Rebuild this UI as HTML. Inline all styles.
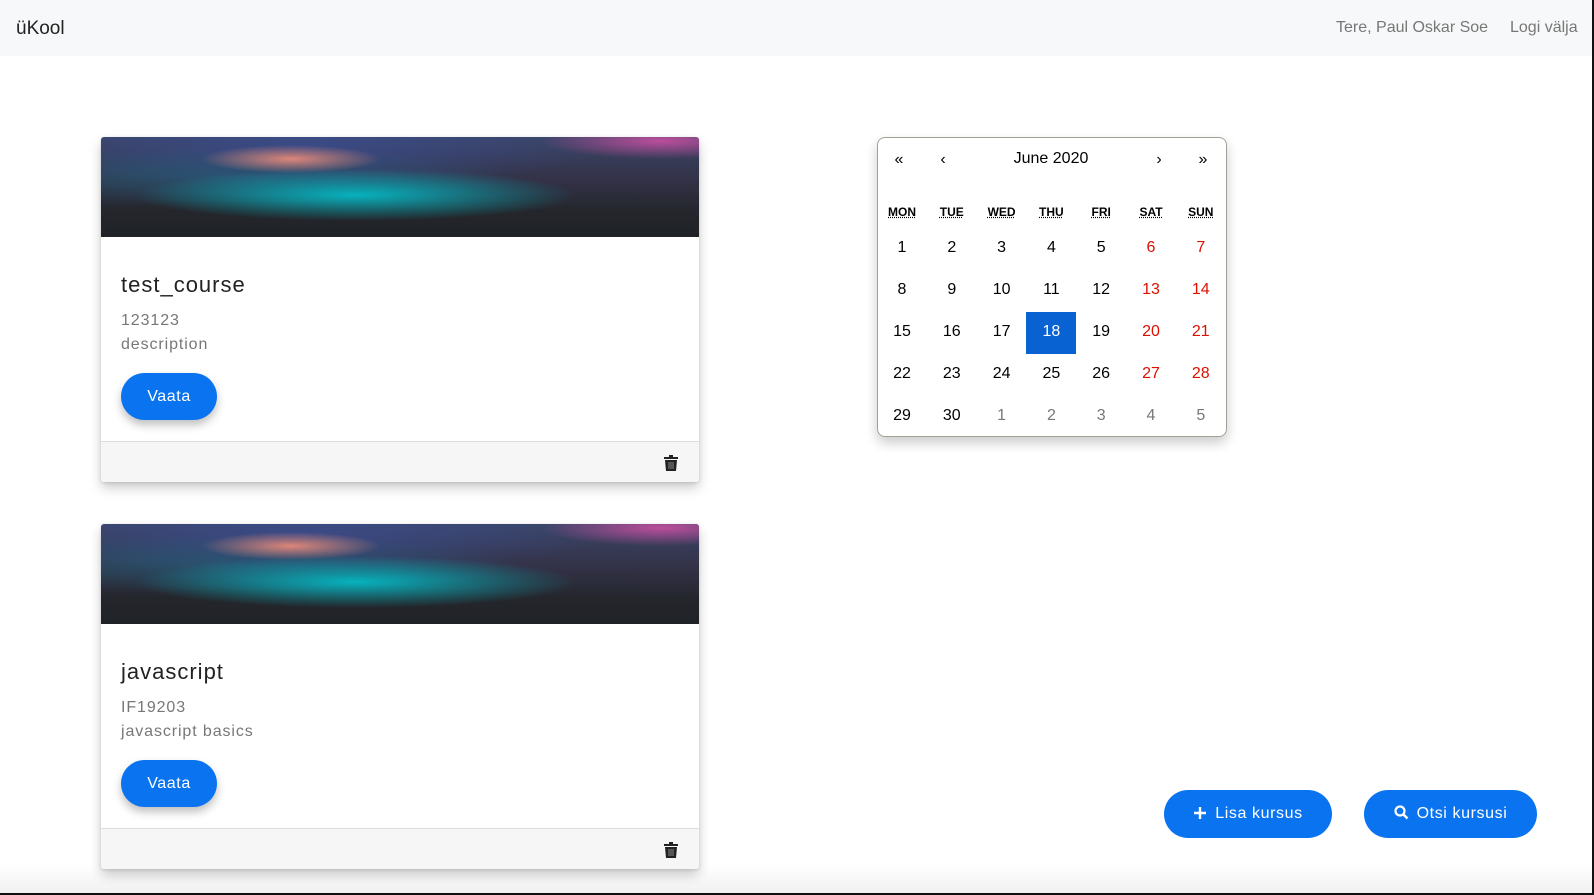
<!DOCTYPE html>
<html><head><meta charset="utf-8"><style>
*{box-sizing:border-box;margin:0;padding:0}
body{width:1594px;height:895px;overflow:hidden;background:#fff;font-family:"Liberation Sans",sans-serif;position:relative}
.nav{position:absolute;left:0;top:0;width:1594px;height:56px;background:#f7f8f9}
.brand{position:absolute;left:16px;top:18px;font-size:19px;color:#222}
.nr{position:absolute;top:19px;font-size:16px;color:#777}
.card{position:absolute;left:101px;width:598px;height:345px;background:#fff;border-radius:3px;box-shadow:0 6px 12px rgba(0,0,0,.2),0 1px 3px rgba(0,0,0,.12);overflow:hidden;z-index:2}
.img{height:100px;background:
radial-gradient(ellipse 90px 14px at 190px 22px,rgba(240,140,120,.9),transparent),
radial-gradient(ellipse 220px 26px at 255px 58px,rgba(0,200,210,.85),transparent),
radial-gradient(ellipse 120px 18px at 560px 4px,rgba(220,80,170,.8),transparent),
radial-gradient(ellipse 300px 30px at 120px 40px,rgba(30,110,140,.5),transparent),
radial-gradient(ellipse 300px 40px at 200px 10px,rgba(60,80,160,.6),transparent),
linear-gradient(180deg,#3a4566 0%,#34334a 40%,#24262c 75%,#1f2226 100%)}
.t{position:absolute;left:20px;top:135px;font-size:22px;color:#222;letter-spacing:1px}
.s{position:absolute;left:20px;font-size:16px;color:#777;letter-spacing:.9px}
.btn{position:absolute;background:#0a74f0;color:#fff;border-radius:24px;font-size:16px;text-align:center;letter-spacing:.6px}
.vaata{left:20px;top:236px;width:96px;height:47px;line-height:47px;box-shadow:0 5px 9px rgba(0,0,0,.25)}
.foot{position:absolute;left:0;bottom:0;width:100%;height:41px;background:#f6f6f6;border-top:1px solid #ddd}
.trash{position:absolute;right:21px;top:13px}
.cal{position:absolute;left:877px;top:137px;width:350px;height:300px;border:1px solid #a0a096;border-radius:8px;box-shadow:0 6px 12px rgba(0,0,0,.2)}
.cal div{position:absolute;text-align:center;font-size:16px;color:#000}
.wd{font-size:12px!important;font-weight:bold;text-decoration:underline dotted}
</style></head><body>
<div style="position:absolute;left:0;top:865px;width:1594px;height:30px;background:linear-gradient(#fff,#f0f0f0)"></div>
<div class="nav"><div class="brand">üKool</div><div class="nr" style="left:1336px">Tere, Paul Oskar Soe</div><div class="nr" style="left:1510px">Logi välja</div></div>

<div class="card" style="top:137px"><div class="img"></div><div class="t">test_course</div><div class="s" style="top:175px">123123</div><div class="s" style="top:199px">description</div><div class="btn vaata">Vaata</div><div class="foot"><svg class="trash" width="14" height="16" viewBox="0 0 14 16"><rect x="0" y="2" width="14" height="2" fill="#222"/><rect x="5" y="0" width="4" height="2" fill="#222"/><path d="M1 5h12l-1 11H2z" fill="#222"/><path d="M5 7v7M7 7v7M9 7v7" stroke="#888" stroke-width="1"/></svg></div></div>

<div class="card" style="top:524px"><div class="img"></div><div class="t">javascript</div><div class="s" style="top:175px">IF19203</div><div class="s" style="top:199px">javascript basics</div><div class="btn vaata">Vaata</div><div class="foot"><svg class="trash" width="14" height="16" viewBox="0 0 14 16"><rect x="0" y="2" width="14" height="2" fill="#222"/><rect x="5" y="0" width="4" height="2" fill="#222"/><path d="M1 5h12l-1 11H2z" fill="#222"/><path d="M5 7v7M7 7v7M9 7v7" stroke="#888" stroke-width="1"/></svg></div></div>

<div class="cal">
<div style="left:6px;top:13px;width:30px">«</div><div style="left:50px;top:13px;width:30px">‹</div>
<div style="left:98px;top:12px;width:150px">June 2020</div>
<div style="left:266px;top:13px;width:30px">›</div><div style="left:310px;top:13px;width:30px">»</div>
<div style="left:148px;top:174px;width:50px;height:42px;background:#0862d2"></div>
<div id="g"></div>
</div>
<script>
var c=document.querySelector('.cal'),h='';
var w=['MON','TUE','WED','THU','FRI','SAT','SUN'];
for(var i=0;i<7;i++)h+='<div class="wd" style="left:'+(i*49.8-1)+'px;top:67px;width:50px">'+w[i]+'</div>';
var d=[];for(var i=1;i<=30;i++)d.push(i);d.push(1,2,3,4,5);
for(var k=0;k<35;k++){var r=Math.floor(k/7),col=k%7,col2='#000';
if(col>=5)col2='#d10';if(k>=30)col2='#777';if(d[k]==18&&k<30)col2='#fff';
h+='<div style="left:'+(col*49.8-1)+'px;top:'+(101+r*42)+'px;width:50px;color:'+col2+'">'+d[k]+'</div>';}
c.insertAdjacentHTML('beforeend',h);
</script>

<div class="btn" style="left:1164px;top:790px;width:168px;height:48px;line-height:48px"><svg width="14" height="14" viewBox="0 0 14 14" style="vertical-align:-2px;margin-right:8px"><path d="M7 1v12M1 7h12" stroke="#fff" stroke-width="2.4"/></svg>Lisa kursus</div>
<div class="btn" style="left:1364px;top:790px;width:173px;height:48px;line-height:48px"><svg width="15" height="15" viewBox="0 0 15 15" style="vertical-align:-2px;margin-right:8px"><circle cx="6" cy="6" r="4.5" stroke="#fff" stroke-width="2.2" fill="none"/><path d="M9.5 9.5l4 4" stroke="#fff" stroke-width="2.4"/></svg>Otsi kursusi</div>

<div style="position:absolute;left:1592px;top:0;width:2px;height:895px;background:#111;z-index:3"></div>
<div style="position:absolute;left:0;top:893px;width:1594px;height:2px;background:#111;z-index:3"></div>
</body></html>
